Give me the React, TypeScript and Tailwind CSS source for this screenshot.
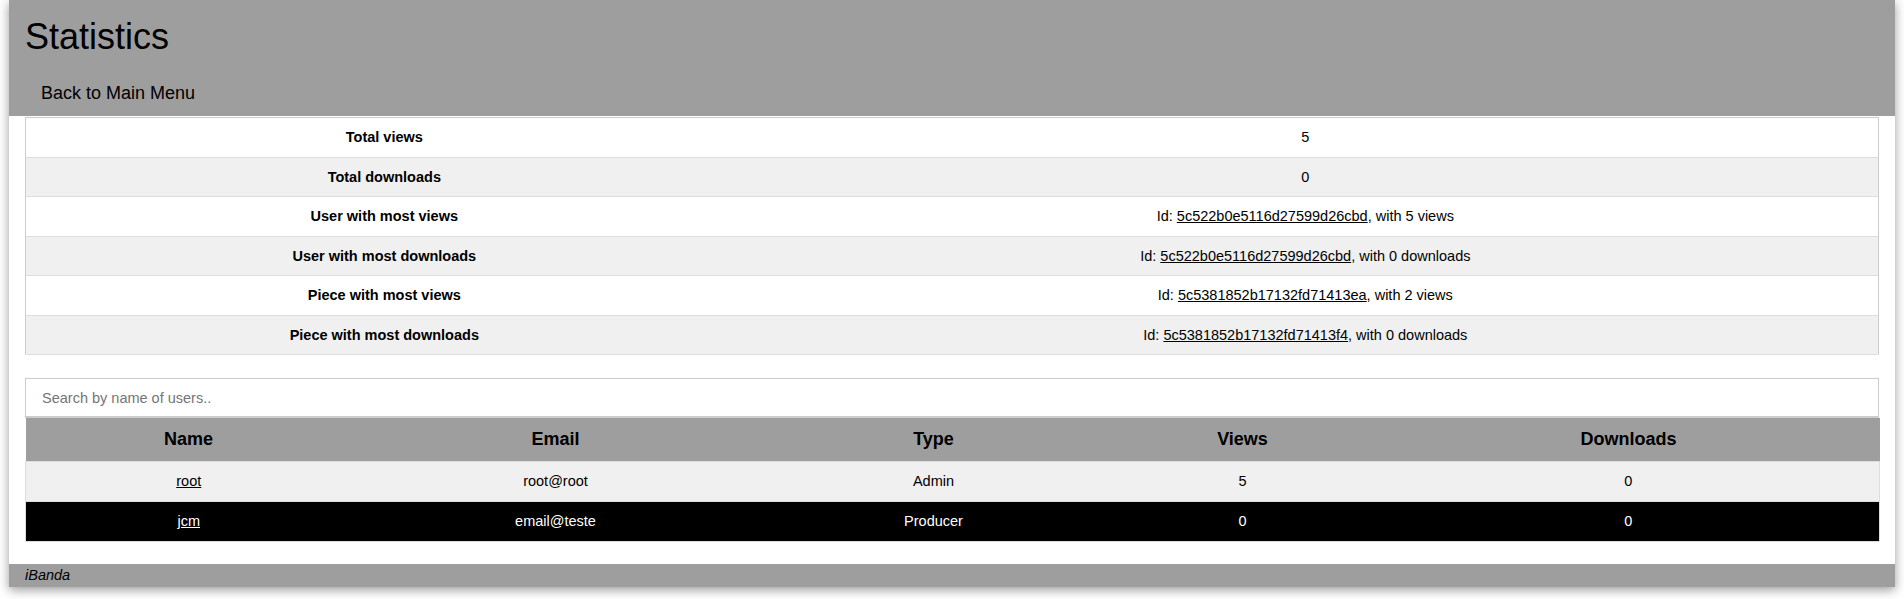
import React, { useState } from 'react';

const stats = [
  { label: 'Total views', value: '5' },
  { label: 'Total downloads', value: '0' },
  { label: 'User with most views', id: '5c522b0e5116d27599d26cbd', suffix: ', with 5 views' },
  { label: 'User with most downloads', id: '5c522b0e5116d27599d26cbd', suffix: ', with 0 downloads' },
  { label: 'Piece with most views', id: '5c5381852b17132fd71413ea', suffix: ', with 2 views' },
  { label: 'Piece with most downloads', id: '5c5381852b17132fd71413f4', suffix: ', with 0 downloads' },
];

const users = [
  { name: 'root', email: 'root@root', type: 'Admin', views: 5, downloads: 0 },
  { name: 'jcm', email: 'email@teste', type: 'Producer', views: 0, downloads: 0 },
];

export default function App() {
  const [search, setSearch] = useState('');

  const filtered = users.filter((u) => u.name.toLowerCase().includes(search.toLowerCase()));

  return (
    <div className="min-h-screen bg-white font-['Liberation_Sans',Arial,sans-serif] text-black">
      <div className="mx-[9px] bg-white shadow-[0_3px_10px_rgba(0,0,0,0.4)]">
        {/* Header */}
        <header className="bg-[#9e9e9e] px-4 pt-4">
          <h1 className="text-[36px] leading-[41px] font-normal">Statistics</h1>
          <nav className="mt-[14px]">
            <a href="#" className="inline-block px-4 pt-3 pb-[12px] text-[18px] leading-[21px] text-black">
              Back to Main Menu
            </a>
          </nav>
        </header>

        <main className="px-4 pt-px pb-[22px]">
          {/* Global stats */}
          <table className="w-full border-collapse border border-[#cccccc] text-[14.5px]">
            <tbody>
              {stats.map((s, i) => (
                <tr key={s.label} className={i % 2 === 0 ? 'bg-white' : 'bg-[#f0f0f0]'}>
                  <td className="w-[38.7%] border-b border-[#dddddd] py-[11px] text-center leading-[16.5px] font-bold">
                    {s.label}
                  </td>
                  <td className="border-b border-[#dddddd] py-[11px] pr-[10px] text-center leading-[16.5px]">
                    {s.id ? (
                      <>
                        Id: <a href="#" className="text-black underline">{s.id}</a>
                        {s.suffix}
                      </>
                    ) : (
                      s.value
                    )}
                  </td>
                </tr>
              ))}
            </tbody>
          </table>

          {/* User search */}
          <input
            type="text"
            value={search}
            onChange={(e) => setSearch(e.target.value)}
            placeholder="Search by name of users.."
            className="mt-[23px] block h-[40px] w-full border border-b-2 border-[#cccccc] bg-white px-4 text-[14.5px] outline-none placeholder:text-[#757575]"
          />

          <table className="w-full table-fixed border-collapse text-[14.5px]">
            <thead>
              <tr className="bg-[#9e9e9e]">
                <th className="w-[326px] py-[11px] text-[18px] leading-[21px] font-bold">Name</th>
                <th className="w-[408px] py-[11px] text-[18px] leading-[21px] font-bold">Email</th>
                <th className="w-[348px] py-[11px] text-[18px] leading-[21px] font-bold">Type</th>
                <th className="w-[270px] py-[11px] text-[18px] leading-[21px] font-bold">Views</th>
                <th className="w-[502px] py-[11px] text-[18px] leading-[21px] font-bold">Downloads</th>
              </tr>
            </thead>
            <tbody>
              {filtered.map((u, i) => (
                <tr
                  key={u.name}
                  className={
                    i % 2 === 0
                      ? 'border border-[#dddddd] bg-[#f0f0f0] text-black'
                      : 'border border-[#dddddd] bg-black text-white'
                  }
                >
                  <td className="py-[11px] text-center leading-[17px]">
                    <a href="#" className="underline">{u.name}</a>
                  </td>
                  <td className="py-[11px] text-center leading-[17px]">{u.email}</td>
                  <td className="py-[11px] text-center leading-[17px]">{u.type}</td>
                  <td className="py-[11px] text-center leading-[17px]">{u.views}</td>
                  <td className="py-[11px] text-center leading-[17px]">{u.downloads}</td>
                </tr>
              ))}
            </tbody>
          </table>
        </main>

        <footer className="h-[23px] bg-[#9e9e9e] px-4 text-[14.5px] leading-[23px] italic">iBanda</footer>
      </div>
    </div>
  );
}
